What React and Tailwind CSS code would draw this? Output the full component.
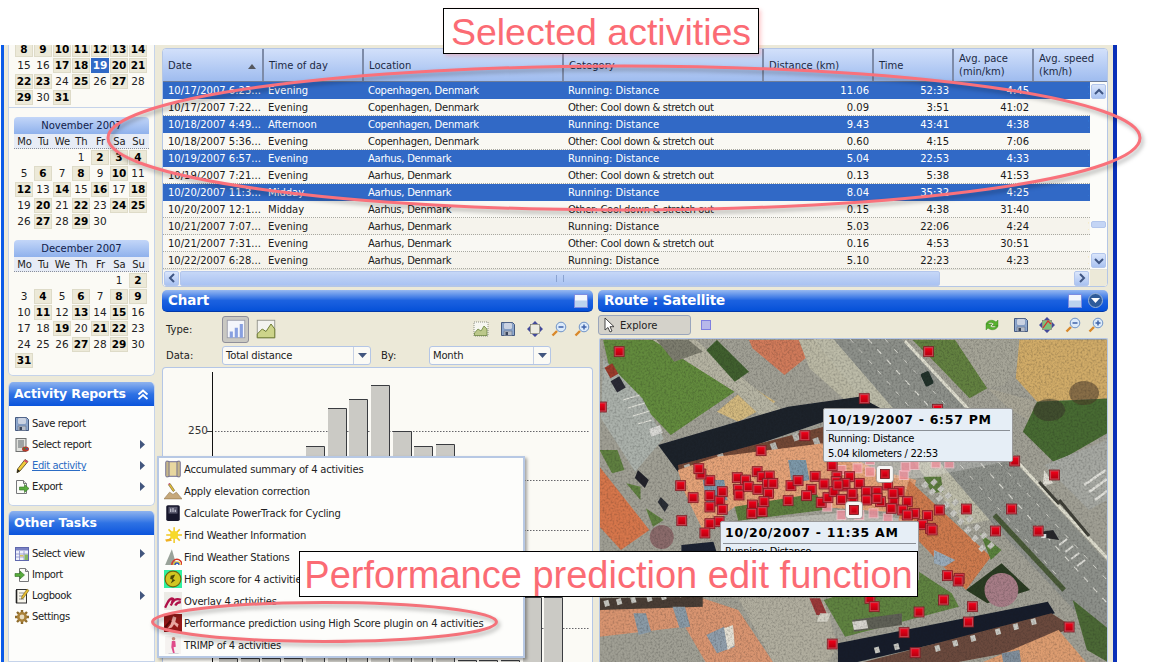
import React from "react";

const Svg = ({ s = 16, className = "", children }) => (
  <svg width={s} height={s} viewBox="0 0 16 16" className={`shrink-0 ${className}`}>{children}</svg>
);

const Floppy = () => (
  <Svg>
    <path d="M1.5 1.5h11l2 2v11h-13z" fill="#8fa9cf" stroke="#45597e" />
    <rect x="4" y="2" width="8" height="6" fill="#f2f5fa" stroke="#6d81a5" strokeWidth=".6" />
    <path d="M5 4h6M5 6h6" stroke="#8fa0bf" strokeWidth=".8" />
    <rect x="4" y="10" width="8" height="4.5" fill="#b7bdc8" stroke="#5d6b85" strokeWidth=".6" />
    <rect x="5.5" y="11" width="2.5" height="3" fill="#39445a" />
  </Svg>
);
const SelectReport = () => (
  <Svg>
    <rect x="2" y="1.5" width="10" height="13" fill="#dfe0dc" stroke="#6f7170" />
    <rect x="4" y="3" width="6" height="8" fill="#9fa3a3" />
    <ellipse cx="11.5" cy="12" rx="3.5" ry="2.5" fill="#b93a2a" />
    <circle cx="10.5" cy="11.6" r="1" fill="#3a8a3a" />
    <circle cx="13" cy="11.8" r=".9" fill="#3158b8" />
  </Svg>
);
const Pencil = () => (
  <Svg>
    <path d="M11 1.5l3 2L6 13l-3 1.8L3.6 11z" fill="#f2cc3a" stroke="#4f4320" strokeWidth=".8" />
    <path d="M11 1.5l3 2-1.2 1.6-3-2z" fill="#d9506a" />
    <path d="M3.6 11L3 14.8 6 13z" fill="#23211a" />
  </Svg>
);
const ExportI = () => (
  <Svg>
    <path d="M2.5 1.5h7l3 3v10h-10z" fill="#fbfbf8" stroke="#77787a" />
    <path d="M9.5 1.5v3h3" fill="#dcdcd8" stroke="#77787a" />
    <path d="M5.5 8h5V5.5L15 9.5l-4.5 4V11h-5z" fill="#58ab3c" stroke="#2f6f24" strokeWidth=".6" />
  </Svg>
);
const SelectView = () => (
  <Svg>
    <rect x="1.5" y="1.5" width="13" height="13" fill="#eef0fa" stroke="#5f68ad" />
    <rect x="2" y="2" width="12" height="2.5" fill="#7b82c4" />
    <path d="M2 8h12M2 11h8M5.5 5v9M10 5v9" stroke="#8a90c8" strokeWidth=".8" />
    <rect x="10.5" y="8.5" width="3.5" height="5.5" fill="#86b860" />
    <rect x="6" y="9" width="3.5" height="1.5" fill="#d9c35a" />
  </Svg>
);
const ImportI = () => (
  <Svg>
    <path d="M5.5 1.5h6l3 3v10h-9z" fill="#fbfbf8" stroke="#77787a" />
    <path d="M11.5 1.5v3h3" fill="#dcdcd8" stroke="#77787a" />
    <path d="M1 6.5h5V4l4.5 4L6 12V9.5H1z" fill="#58ab3c" stroke="#2f6f24" strokeWidth=".6" />
  </Svg>
);
const Logbook = () => (
  <Svg>
    <rect x="2.5" y="1.5" width="10" height="13.5" fill="#f8f6ec" stroke="#333" />
    <path d="M2.5 2v13" stroke="#222" strokeWidth="1.6" />
    <path d="M5 5h5M5 8h5M5 11h5" stroke="#777" strokeWidth=".8" />
    <path d="M13 1l2 1.5-5.5 7.5-2 1 .3-2.4z" fill="#e6bd30" stroke="#5a4a16" strokeWidth=".5" />
  </Svg>
);
const Gear = () => (
  <Svg>
    <g stroke="#8c6a2c" strokeWidth="2.4">
      <path d="M8 1v14M1 8h14M3 3l10 10M13 3L3 13" />
    </g>
    <circle cx="8" cy="8" r="5" fill="#a98138" />
    <circle cx="8" cy="8" r="2.4" fill="#e8dcc0" />
  </Svg>
);
const Scroll = () => (
  <Svg s={18}>
    <rect x="3" y="1.5" width="10" height="13" fill="#e8d7a0" stroke="#7d7aa0" />
    <rect x="1.5" y="1" width="3" height="14" rx="1" fill="#c6b68a" stroke="#5f5f8e" strokeWidth=".7" />
    <rect x="11.5" y="1" width="3" height="14" rx="1" fill="#c6b68a" stroke="#5f5f8e" strokeWidth=".7" />
  </Svg>
);
const Elev = () => (
  <Svg s={18}>
    <path d="M0 15l5-6 3 2 3-2 5 6z" fill="#c6a87a" stroke="#8c7146" strokeWidth=".5" />
    <path d="M4 2.5l1.5-1 4 6-1.4 1z" fill="#e6c13a" stroke="#5a4516" strokeWidth=".5" />
    <path d="M4 2.5l1.5-1-.4-.7-1.5 1z" fill="#c8407a" />
  </Svg>
);
const Power = () => (
  <Svg s={18}>
    <rect x="2" y="1" width="12" height="14" rx="1.5" fill="#17172c" />
    <rect x="4" y="2.5" width="8" height="6" fill="#59596e" />
    <path d="M6 7V4M8 7V3.5M10 7V5" stroke="#d8d8e4" strokeWidth=".9" />
  </Svg>
);
const Sun = () => (
  <Svg s={18}>
    <g stroke="#f1c71c" strokeWidth="1.3">
      <path d="M9 1v14M2 8h14M4 3l10 10M14 3L4 13" />
    </g>
    <circle cx="9" cy="8" r="3.6" fill="#f7d92a" />
    <path d="M1 12l5-1 1 2-5 1z" fill="#f0b020" />
  </Svg>
);
const Rainbow = () => (
  <Svg s={18}>
    <path d="M1 15L7 1l4 14z" fill="#9aa39a" />
    <path d="M7 15a4.5 5 0 0 1 9 0" fill="none" stroke="#d83a2a" strokeWidth="1.3" />
    <path d="M8.4 15a3.2 3.5 0 0 1 6.2 0" fill="none" stroke="#e8c52a" strokeWidth="1.2" />
    <path d="M9.6 15a2 2.4 0 0 1 3.8 0" fill="none" stroke="#2852c0" strokeWidth="1.2" />
  </Svg>
);
const Score = () => (
  <Svg s={18}>
    <rect x="0" y="0" width="16" height="16" fill="#2ff0a0" />
    <circle cx="8" cy="8" r="7" fill="#d2c520" stroke="#6e6410" />
    <path d="M6 5l4-1-2 4 2 1-4 3 1.500-3.500-2-.5z" fill="#4c4808" />
  </Svg>
);
const Overlay = () => (
  <Svg s={18}>
    <rect width="16" height="16" fill="#ecebe6" />
    <path d="M1 14C4 7 6 5 8 6l-1 4M6 12c2-5 5-7 9-5M10 12c1-2 2-3 5-3" fill="none" stroke="#b01048" strokeWidth="2" />
  </Svg>
);
const Perf = () => (
  <Svg s={18}>
    <rect width="16" height="16" fill="#951818" />
    <path d="M8 2l3 1-1 4 3 2-1 3-3-3-2 3-4 1 3-4 1-4z" fill="#e9a6a0" />
    <path d="M0 13L6 6" stroke="#5a0808" strokeWidth="2" />
  </Svg>
);
const Trimp = () => (
  <Svg s={18}>
    <rect x="1" width="14" height="16" fill="#f5f2f0" />
    <circle cx="8.500" cy="2.500" r="1.600" fill="#c98a7a" />
    <path d="M7 4.500h3l.5 5-2 .5 1 5H8l-1.500-5z" fill="#e04a8a" />
    <path d="M4 16h9" stroke="#bcbcc8" strokeWidth="1" />
  </Svg>
);
const BarIcon = () => (
  <Svg s={20}>
    <rect x="1" y="1" width="14" height="14" fill="#f4f6fb" stroke="#9a9ca8" strokeWidth=".7" />
    <rect x="3" y="10" width="2.500" height="5" fill="#88a0e0" />
    <rect x="7" y="7" width="2.500" height="8" fill="#88a0e0" />
    <rect x="11" y="4" width="2.500" height="11" fill="#88a0e0" />
  </Svg>
);
const AreaIcon = ({ s = 20 }) => (
  <Svg s={s}>
    <rect x="1" y="1" width="14" height="14" fill="#f3f3ef" stroke="#8f8f86" strokeWidth=".7" />
    <path d="M1 12l4-4 3 2 4-6 3 4v7H1z" fill="#cdd48a" stroke="#6f7c35" strokeWidth=".8" />
  </Svg>
);
const ChartSmall = () => (
  <Svg>
    <rect x="1" y="1" width="14" height="14" fill="#f6f6f0" stroke="#77786c" strokeWidth=".8" strokeDasharray="1 1" />
    <path d="M1.500 12l3.500-4 3 2 3-5 3 3v6.500h-12.500z" fill="#bcc88a" stroke="#5f7a30" strokeWidth=".7" />
  </Svg>
);
const MoveI = ({ map }) => (
  <Svg>
    <rect x="3.500" y="3.500" width="9" height="9" fill={map ? "#7cc07a" : "#ecebe0"} stroke="#7a7a70" strokeWidth=".7" />
    {map && <path d="M4 11l5-7 3 3" stroke="#dc2a2a" strokeWidth="1.200" fill="none" />}
    <path d="M8 0l3 3H5zM8 16l-3-3h6zM0 8l3-3v6zM16 8l-3 3V5z" fill="#434a9a" />
  </Svg>
);
const Zoom = ({ plus }) => (
  <Svg>
    <path d="M6 10L1.500 14.500" stroke="#d9882a" strokeWidth="2.400" />
    <circle cx="10" cy="6" r="4.800" fill="#dbeafa" stroke="#6f93c6" />
    <path d="M7.500 6h5" stroke="#3e62a8" strokeWidth="1.500" />
    {plus && <path d="M10 3.500v5" stroke="#3e62a8" strokeWidth="1.500" />}
  </Svg>
);
const Refresh = () => (
  <Svg>
    <path d="M2 7c1-4 7-5 10-2l2-2v6H8l2-2C8 5 5 5 4 7z" fill="#58b030" stroke="#2f7a1a" strokeWidth=".4" />
    <path d="M14 9c-1 4-7 5-10 2l-2 2V7h6L6 9c2 2 5 2 6 0z" fill="#58b030" stroke="#2f7a1a" strokeWidth=".4" />
  </Svg>
);
const Cursor = () => (
  <Svg>
    <path d="M3 1l0 12 3-2.500 2 4.500 2-1-2-4.300h4z" fill="#fff" stroke="#333" strokeWidth=".9" />
  </Svg>
);
const Collapse = () => (
  <span className="flex flex-col w-[14px] h-[14px] border border-[#7c8ce0] bg-[#d8e4f6] gap-px">
    <span className="h-[5px] bg-[#f4f7fc]" />
    <span className="h-[6px] bg-[#bcd3ee]" />
  </span>
);
const Tri = ({ c = "#42567e" }) => (
  <svg width="9" height="6" viewBox="0 0 9 6" className="shrink-0"><path d="M0 0h9L4.500 5z" fill={c} /></svg>
);
const RightTri = () => (
  <svg width="5" height="9" viewBox="0 0 5 9" className="shrink-0"><path d="M0 0l5 4.500L0 9z" fill="#42567e" /></svg>
);

const Cell = ({ d }) => {
  if (d === 0) return <span className="w-[18px] h-[15px]" />;
  const b = typeof d === "string";
  const sel = d === "19*";
  const n = b ? d.replace(/[b*]/g, "") : d;
  return (
    <span
      className={`w-[18px] h-[15px] flex items-center justify-center text-[10.5px] leading-none ${
        sel ? "bg-[#3169c6] text-white font-bold" : b ? "bg-[#ece9d8] border border-[#dedbc8] font-bold text-black" : "text-[#222]"
      }`}
    >
      {n}
    </span>
  );
};
const Days = ({ rows, className = "" }) => (
  <div className={`grid grid-cols-[repeat(7,18px)] gap-x-px gap-y-px ${className}`}>
    {rows.flat().map((d, i) => <Cell key={i} d={d} />)}
  </div>
);
const Month = ({ title, rows, className }) => (
  <div className={`${className} w-[135px] -ml-px`}>
    <div className="h-[17px] rounded-t-[4px] bg-gradient-to-b from-[#c3d6f8] to-[#8fb1ec] text-center text-[10px] leading-[17px] text-[#10204a]">{title}</div>
    <div className="h-[15px] pl-px grid grid-cols-[repeat(7,19px)] text-center text-[10px] leading-[15px] bg-[#e7ecf6] border-b border-dotted border-[#8a8f9a] text-[#222]">
      {["Mo", "Tu", "We", "Th", "Fr", "Sa", "Su"].map((w) => <span key={w}>{w}</span>)}
    </div>
    <Days rows={rows} className="pt-px pl-px" />
  </div>
);

const oct = [["8b","9b","10b","11b","12b","13b","14b"],[15,16,"17b","18b","19*","20b","21b"],["22b","23b",24,"25b",26,"27b",28],["29b",30,"31b",0,0,0,0]];
const nov = [[0,0,0,1,"2b","3b","4b"],[5,"6b",7,"8b",9,"10b",11],["12b",13,"14b",15,"16b",17,"18b"],[19,"20b",21,"22b",23,"24b","25b"],[26,"27b",28,"29b",30,0,0]];
const dec = [[0,0,0,0,0,1,"2b"],[3,"4b",5,"6b",7,"8b","9b"],[10,"11b",12,"13b",14,"15b",16],[17,18,"19b",20,"21b","22b",23],[24,25,26,"27b",28,"29b",30],["31b",0,0,0,0,0,0]];

const grad = "bg-gradient-to-b from-[#8fb3ee] via-[#2e72e4] to-[#0a54dc]";

const TaskRow = ({ icon, label, arrow, link }) => (
  <div className="h-[21px] flex items-center pl-[5px] pr-[9px] gap-[2px]">
    <span className="w-4 flex justify-center">{icon}</span>
    <span className={`flex-1 text-[10px] tracking-[-0.4px] ${link ? "text-[#2b6cc4] underline" : "text-[#222]"}`}>{label}</span>
    {arrow && <RightTri />}
  </div>
);

const cols = "grid grid-cols-[101px_100px_200px_200px_110px_80px_80px_55px]";
const Head = ({ children, sort, last }) => (
  <div className={`flex items-center justify-between pl-[5px] pr-[5px] text-[10px] leading-[13px] text-[#1c2a44] whitespace-nowrap ${last ? "" : "border-r-2 border-[#7d8ba8]"}`}>
    <span>{children}</span>
    {sort && <svg width="8" height="5" viewBox="0 0 8 5" className="mt-[3px] mr-px shrink-0"><path d="M4 0l4 5H0z" fill="#55585f" /></svg>}
  </div>
);

const CPH = "Copenhagen, Denmark";
const AAR = "Aarhus, Denmark";
const RUN = "Running: Distance";
const OTH = "Other: Cool down & stretch out";
const data = [
  ["10/17/2007 6:23...", "Evening", CPH, RUN, "11.06", "52:33", "4:45", 1],
  ["10/17/2007 7:22...", "Evening", CPH, OTH, "0.09", "3:51", "41:02", 0],
  ["10/18/2007 4:49...", "Afternoon", CPH, RUN, "9.43", "43:41", "4:38", 1],
  ["10/18/2007 5:36...", "Evening", CPH, OTH, "0.60", "4:15", "7:06", 0],
  ["10/19/2007 6:57...", "Evening", AAR, RUN, "5.04", "22:53", "4:33", 1],
  ["10/19/2007 7:21...", "Evening", AAR, OTH, "0.13", "5:38", "41:53", 0],
  ["10/20/2007 11:3...", "Midday", AAR, RUN, "8.04", "35:32", "4:25", 1],
  ["10/20/2007 12:1...", "Midday", AAR, OTH, "0.15", "4:38", "31:40", 0],
  ["10/21/2007 7:07...", "Evening", AAR, RUN, "5.03", "22:06", "4:24", 0],
  ["10/21/2007 7:31...", "Evening", AAR, OTH, "0.16", "4:53", "30:51", 0],
  ["10/22/2007 6:28...", "Evening", AAR, RUN, "5.10", "22:23", "4:23", 0],
];

const ScrollBtn = ({ dir, className = "" }) => {
  const p = { u: "M2 8l4-4 4 4", d: "M2 4l4 4 4-4", l: "M8 2L4 6l4 4", r: "M4 2l4 4-4 4" }[dir];
  return (
    <span className={`w-[15px] h-[15px] rounded-[2px] border border-[#b3c6ec] bg-gradient-to-b from-[#dbe6fb] to-[#a9c2f1] flex items-center justify-center shrink-0 ${className}`}>
      <svg width="12" height="12" viewBox="0 0 12 12"><path d={p} fill="none" stroke="#3f5684" strokeWidth="2" /></svg>
    </span>
  );
};

const Table = () => (
  <div className="h-[239px] w-[946px] mt-[3px] rounded-[4px] border border-[#b4c6e6] bg-[#fbfaf5] overflow-hidden flex flex-col shrink-0">
    <div className={`${cols} h-[33px] bg-gradient-to-b from-[#d2e0fa] to-[#9fbcef] border-b border-[#6f7d98] shrink-0`}>
      <Head sort>Date</Head>
      <Head>Time of day</Head>
      <Head>Location</Head>
      <Head>Category</Head>
      <Head>Distance (km)</Head>
      <Head>Time</Head>
      <Head>Avg. pace<br />(min/km)</Head>
      <Head last>Avg. speed<br />(km/h)</Head>
    </div>
    <div className="flex flex-1 min-h-0 relative">
      <div className="w-[927px]">
        {data.map((r, i) => {
          const sel = r[7];
          return (
            <div
              key={i}
              className={`${cols} h-[17px] leading-[17px] text-[10px] border-b border-dotted ${
                sel ? "bg-[#3169c6] text-white border-[#3169c6]" : `text-[#1a1a1a] border-[#a8a8a0] ${i % 2 === 0 ? "bg-[#f5f3ec]" : "bg-[#f9f8f3]"}`
              }`}
            >
              <span className="pl-[5px] whitespace-nowrap">{r[0]}</span>
              <span className="pl-[4px]">{r[1]}</span>
              <span className="pl-[4px] tracking-[-0.25px]">{r[2]}</span>
              <span className={`pl-[4px] ${r[3] === OTH ? "tracking-[-0.33px]" : ""}`}>{r[3]}</span>
              <span className="text-right pr-[5px]">{r[4]}</span>
              <span className="text-right pr-[5px]">{r[5]}</span>
              <span className="text-right pr-[5px]">{r[6]}</span>
              <span className="pl-[54px] overflow-hidden">{i % 2 === 0 ? "1" : ""}</span>
            </div>
          );
        })}
      </div>
      <div className="w-[17px] h-[187px] bg-[#fcfcf9] flex flex-col items-center pt-[2px] pb-px relative">
        <ScrollBtn dir="u" />
        <div className="flex-1 pt-[122px]"><div className="w-[15px] h-[7px] rounded-[2px] bg-[#c4d5f5] border border-[#b3c6ec]" /></div>
        <ScrollBtn dir="d" />
      </div>
    </div>
    <div className="h-[17px] shrink-0 flex items-center bg-[#f7f6f1] border-t border-[#e4e3da] relative">
      <ScrollBtn dir="l" className="ml-px" />
      <div className="w-[760px] h-[15px] ml-px rounded-[2px] bg-gradient-to-b from-[#c6d7f7] to-[#aac3f2] border border-[#b3c6ec] flex items-center justify-center">
        <span className="w-[8px] h-[7px] border-x border-[#8aa3d0]" />
      </div>
      <div className="flex-1" />
      <ScrollBtn dir="r" className="mr-px" />
      <div className="w-[17px] h-full bg-[#ece9d8]" />
    </div>
  </div>
);

const PanelHead = ({ title, children }) => (
  <div className="h-[22px] rounded-[5px] border-b border-[#0338a8] bg-gradient-to-b from-[#97b8f0] via-[#1c62e0] via-50% to-[#0450d8] flex items-center justify-between pl-[6px] pr-[5px] shrink-0">
    <span className="text-white font-bold text-[13.5px] leading-none tracking-[-0.15px]">{title}</span>
    <span className="flex items-center gap-[6px]">{children}</span>
  </div>
);

const Select = ({ w, text }) => (
  <div className={`${w} h-[19px] rounded-[3px] border border-[#b4c6e6] bg-[#fbfaf5] flex items-center text-[10px] text-[#222]`}>
    <span className="flex-1 pl-[3px] tracking-[-0.2px]">{text}</span>
    <span className="w-[17px] h-full border-l border-[#c6d0e4] flex items-center justify-center"><Tri /></span>
  </div>
);

const barsTop = [658, 658, 658, 658, 446, 408, 399, 385, 431, 446, 444, 660, 660, 660, 597, 597];
const barsX = [219, 241, 262, 284, 306, 328, 349, 371, 393, 414, 436, 458, 479, 501, 523, 544];
const Chart = () => (
  <svg className="block" width="429" height="294" viewBox="163 368 429 294">
    {[431, 480, 530, 579, 628].map((y) => (
      <path key={y} d={`M215 ${y + 0.5}H590`} stroke="#66666a" strokeWidth="1" strokeDasharray="1.500 1.500" />
    ))}
    {barsX.map((x, i) => {
      const r = x + 18;
      return (
        <g key={x}>
          <rect x={x} y={barsTop[i]} width={r - x} height={662 - barsTop[i]} fill="#cbcac5" />
          <path d={`M${x} ${barsTop[i] + 0.5}H${r + 0.5}V662`} fill="none" stroke="#3a3c40" strokeWidth="1" />
        </g>
      );
    })}
    <path d="M212.500 372V662" stroke="#111" strokeWidth="1" />
    <path d="M207 431.500h5" stroke="#333" strokeWidth="1" />
    <text x="188" y="434" fontSize="10.500" fill="#333" fontFamily="DejaVu Sans">250</text>
  </svg>
);

const z6 = (x, y) => [595 + x / 2.8, 285 + y / 3];
const z7 = (x, y) => [595 + x / 2.8, 450 + y / 3];
const markers = [
  ...[[65,200],[935,200],[754,341],[15,366],[960,373],[587,452],[464,497]].map(([x, y]) => z6(x, y)),
  ...[[238,107],[273,143],[320,92],[295,72],[289,56],[320,137],[348,153],[320,171],[355,125],[355,178],[346,215],[320,221],[306,249],[241,212],
    [397,83],[420,90],[400,118],[402,135],[428,110],[453,65],[467,80],[487,78],[482,100],[497,100],[455,118],[485,130],[472,155],[440,165],[438,190],[467,185],[540,152],[548,107],[568,92],[605,118],[592,137],[616,79],[641,102],[633,157],[652,143],[669,125],[677,80],[675,95],[698,108],[713,80],[690,148],[722,148],[740,100],[760,125],[790,125],[820,105],[852,125],[800,155],[760,150],[837,150],[875,155],[862,180],[895,190],[875,195],[830,175],[932,197],[965,180],[1041,177],[1168,177],[1123,243],[1243,243],[918,224],[940,235],[945,240],[988,377],[1021,385],[1018,393],[977,450],[1058,470],[770,445],[782,470],[908,486],[1047,516],[1330,531],[866,548],[664,582],[897,608],[1289,75],[1177,33],[664,47],[700,100],[680,105],[835,130],[790,145],[720,130]].map(([x, y]) => z7(x, y)),
];
const ghosts = [[770,65],[735,55],[865,75],[870,50],[895,45],[955,40],[993,40],[770,30],[690,195],[820,205],[650,170],[780,190],[740,195],[690,60]].map(([x, y]) => z7(x, y));

const P = ({ pts, z = z6, fill }) => <polygon points={pts.map(([x, y]) => z(x, y).join(",")).join(" ")} fill={fill} />;

const windows = [
  ...[[925,105],[945,125],[965,145],[985,165],[1005,190],[1025,215],[1045,240],[1065,265],[1085,295]].flatMap(([x, y]) => [[x, y, 45], [x + 25, y - 8, 45]]),
  ...[[30,460],[65,455],[105,450],[150,445],[190,440],[240,432]].map(([x, y]) => [x, y, -15]),
  ...[[790,600],[845,590],[960,595],[1010,580],[1060,565],[1130,545],[1180,530],[1230,515]].map(([x, y]) => [x, y, -15]),
].map(([x, y, a]) => [...z7(x, y), a]);

const Map = () => (
  <svg className="block w-full h-full" viewBox="599 339 509 323" preserveAspectRatio="none">
    <defs>
      <filter id="sat" x="0" y="0" width="100%" height="100%">
        <feGaussianBlur stdDeviation="0.6" />
      </filter>
      <filter id="noise" x="0" y="0" width="100%" height="100%" colorInterpolationFilters="sRGB">
        <feTurbulence type="fractalNoise" baseFrequency="0.5" numOctaves="2" seed="4" />
        <feColorMatrix type="matrix" values="0 0 0 0 0.1  0 0 0 0 0.1  0 0 0 0 0.1  1.8 0 0 0 -0.75" />
      </filter>
      <linearGradient id="mk" x1="0" y1="0" x2="0" y2="1">
        <stop offset="0" stopColor="#f00018" />
        <stop offset="1" stopColor="#b40010" />
      </linearGradient>
    </defs>
    <g filter="url(#sat)">
      <rect x="599" y="339" width="509" height="323" fill="#a09f94" />
      <P fill="#628a3c" pts={[[20,165],[160,165],[390,320],[210,450],[40,260]]} />
      <P fill="#d2b87e" pts={[[340,380],[430,300],[505,350],[400,410]]} />
      <P fill="#b5b3a2" pts={[[160,165],[280,165],[540,390],[480,410],[390,320]]} />
      <P fill="#7c7b6e" pts={[[170,165],[260,165],[300,200],[220,230]]} />
      <P fill="#3f5f2f" pts={[[340,165],[430,260],[390,290],[310,195]]} />
      <P fill="#cf7a5a" pts={[[430,165],[570,165],[600,210],[530,270],[440,190]]} />
      <P fill="#bab8a4" pts={[[570,165],[640,165],[780,340],[700,345],[600,250]]} />
      <P fill="#cfcdbb" pts={[[640,165],[690,165],[800,300],[770,320]]} />
      <P fill="#abb1ab" pts={[[20,220],[130,340],[190,460],[110,560],[14,400]]} />
      <g stroke="#e4e4dc" strokeWidth="1">
        <path d="M622 400l17-5M627 408l17-5M632 416l17-5M637 424l14-4" />
      </g>
      <rect x="606" y="365" width="9" height="12" fill="#9c3a2c" transform="rotate(-30 610 371)" />
      <rect x="612" y="378" width="10" height="13" fill="#2a2c34" transform="rotate(-30 617 384)" />
      <rect x="649" y="427" width="12" height="8" fill="#d8d8d4" transform="rotate(-20 655 431)" />
      {/* main road */}
      <polygon points="833,339 902,339 1108,562 1108,645 990,520" fill="#8d908a" />
      <polygon points="813,339 833,339 990,520 965,525" fill="#bcbba8" />
      <path d="M868 339L1108 603" stroke="#dcdcd4" strokeWidth="1.200" strokeDasharray="6 8" />
      <path d="M850 339L1060 578" stroke="#d0d0c8" strokeWidth="1" strokeDasharray="5 9" />
      <path d="M885 339L1108 580" stroke="#d0d0c8" strokeWidth="1" strokeDasharray="5 9" />
      <path d="M905 341L1110 560" stroke="#e0dfd0" strokeWidth="3" />
      <rect x="923" y="372" width="9" height="14" rx="2" fill="#20302c" transform="rotate(-25 927 379)" />
      <P fill="#628040" pts={[[890,165],[1010,165],[1100,310],[1050,340],[960,240]]} />
      <P fill="#a5a497" pts={[[1010,165],[1200,165],[1190,230],[1150,300],[1100,310]]} />
      <P fill="#d0ab68" pts={[[1190,165],[1445,165],[1445,340],[1240,350],[1180,280]]} />
      <P fill="#a8a596" pts={[[1100,310],[1240,350],[1240,420],[1160,370]]} />
      <P fill="#476a30" pts={[[1240,350],[1445,340],[1445,440],[1290,535],[1200,440]]} />
      <ellipse cx="1050" cy="410" rx="16" ry="11" fill="#3a3a2c" opacity=".6" />
      <ellipse cx="1085" cy="393" rx="15" ry="12" fill="#4a3a2a" opacity=".55" />
      <polygon points="1045,465 1108,440 1108,500 1090,510" fill="#a6a8a2" />
      <path d="M1085 485l22-15M1090 492l18-13M1096 500l12-9" stroke="#e0e0da" strokeWidth="2.500" />
      {/* bldg row 1 */}
      <P fill="#1a202c" pts={[[175,480],[540,365],[740,335],[800,370],[640,410],[230,560]]} />
      <P fill="#724636" pts={[[230,540],[640,425],[650,470],[640,510],[240,600]]} />
      <g fill="#b8b8b2">
        {[[258,550],[352,518],[396,524],[500,485],[562,455],[620,470]].map(([x, y]) => {
          const [a, b] = z6(x, y);
          return <rect key={x} x={a - 3} y={b - 4} width="6" height="8" transform={`rotate(-20 ${a} ${b})`} />;
        })}
      </g>
      <P z={z7} fill="#e4a278" pts={[[230,60],[340,20],[640,-20],[790,60],[900,90],[880,190],[620,170],[390,170],[300,240],[250,130]]} />
      <P z={z7} fill="#7c97a8" pts={[[300,90],[360,90],[370,150],[310,160]]} />
      <P z={z7} fill="#7c97a8" pts={[[540,30],[590,30],[600,90],[550,100]]} />
      <P z={z7} fill="#5c7b3c" pts={[[390,170],[620,130],[640,180],[400,212]]} />
      <P z={z7} fill="#5c7b3c" pts={[[920,80],[970,80],[975,125],[945,130]]} />
      <P z={z7} fill="#cd7a4e" pts={[[880,90],[1110,320],[1040,420],[850,210]]} />
      <P z={z7} fill="#99aab8" pts={[[950,300],[1010,330],[980,350],[950,340]]} />
      <P z={z7} fill="#d6764c" pts={[[10,50],[150,240],[70,300],[10,230]]} />
      <P z={z7} fill="#5f7f3f" pts={[[10,0],[60,0],[80,60],[45,70]]} />
      <P z={z7} fill="#5f7f3f" pts={[[140,175],[190,210],[160,230]]} />
      <P z={z7} fill="#5f7f3f" pts={[[85,100],[125,110],[125,150]]} />
      <circle cx="661" cy="537" r="12" fill="#8a6a6a" />
      <P z={z7} fill="#1d2330" pts={[[240,285],[330,275],[340,310],[240,320]]} />
      <polygon points="637,470 648,480 644,488 634,478" fill="#21242a" />
      <polygon points="660,497 668,505 664,512 657,502" fill="#2a2d34" />
      {/* lower */}
      <P z={z7} fill="#d89470" pts={[[10,470],[300,445],[400,480],[500,640],[310,640],[250,530],[10,560]]} />
      <P z={z7} fill="#4a3e34" pts={[[10,445],[300,440],[300,470],[10,480]]} />
      <P z={z7} fill="#8a9aa6" pts={[[105,490],[140,490],[155,545],[120,555]]} />
      <P z={z7} fill="#8a9aa6" pts={[[215,470],[250,470],[265,530],[235,535]]} />
      <P z={z7} fill="#8f9daa" pts={[[310,555],[360,530],[390,590],[340,610]]} />
      <P z={z7} fill="#e4e0d4" pts={[[360,535],[385,525],[390,585],[370,600]]} />
      <P z={z7} fill="#b0ad9e" pts={[[400,445],[640,445],[680,590],[650,640],[500,640]]} />
      <P z={z7} fill="#5e8240" pts={[[640,450],[900,360],[1000,430],[1020,470],[700,560]]} />
      <P z={z7} fill="#2a3a20" pts={[[1040,420],[1140,340],[1220,420],[1100,460]]} />
      <circle cx="1002" cy="590" r="17" fill="#a67c86" />
      <P z={z7} fill="#58803a" pts={[[1080,250],[1140,300],[1110,330]]} />
      <P z={z7} fill="#161e2c" pts={[[680,580],[1270,455],[1290,490],[1100,545],[720,640],[680,640]]} />
      <P z={z7} fill="#6b4a3c" pts={[[740,640],[1280,490],[1340,530],[1200,600],[1000,640]]} />
      <P z={z7} fill="#dc9c70" pts={[[1080,640],[1300,540],[1380,640]]} />
      <P z={z7} fill="#7f8d9a" pts={[[1140,610],[1190,600],[1195,640],[1145,640]]} />
      <P z={z7} fill="#4b6835" pts={[[1340,450],[1445,540],[1445,640],[1380,600]]} />
      <P z={z7} fill="#9a3838" pts={[[600,445],[630,445],[650,495],[620,495]]} />
      <P z={z7} fill="#d4d2c6" pts={[[630,490],[660,490],[650,515],[620,515]]} />
      <P z={z7} fill="#5f6056" pts={[[720,510],[860,490],[860,525],[725,545]]} />
      <P z={z7} fill="#d8d6d0" pts={[[720,515],[760,510],[765,535],[725,540]]} />
      <P z={z7} fill="#e0ded4" pts={[[1260,60],[1285,100],[1255,110]]} />
      <path d="M1040 482l20 22M1060 500l30 36" stroke="#3f3f38" strokeWidth="3" />
      <path d="M995 515l70 75" stroke="#4a5a38" strokeWidth="5" />
      <path d="M1060 545l8 -6M1066 552l8 -6M1072 559l8 -6M1078 566l8 -6" stroke="#dcdcd6" strokeWidth="2" />
      <polygon points="1040,532 1054,530 1060,540 1046,538" fill="#26282c" />
      <rect x="1042" y="534" width="5" height="4" fill="#e4e4e4" />
      <g fill="#c8c8c2">
        {windows.map(([x, y, a], i) => <rect key={i} x={x - 2.500} y={y - 3} width="5" height="6" transform={`rotate(${a} ${x} ${y})`} />)}
      </g>
    </g>
    <rect x="599" y="339" width="509" height="323" filter="url(#noise)" opacity=".3" />
    <polygon points="850,462 1004,462 922,478 885,478" fill="#fff" opacity=".22" />
    <polygon points="738,521 852,512 919,521" fill="#fff" opacity=".28" />
    {ghosts.map(([x, y], i) => (
      <g key={i}><rect x={x - 4.500} y={y - 4.500} width="9" height="9" fill="#ee8a98" stroke="#f8c4cc" strokeWidth="1" opacity=".75" /></g>
    ))}
    {markers.map(([x, y], i) => (
      <g key={i}>
        <rect x={x - 5} y={y - 5} width="10" height="10" fill="#c84452" stroke="#7d1c22" strokeWidth=".8" />
        <rect x={x - 3.500} y={y - 3.500} width="7" height="7" fill="url(#mk)" />
      </g>
    ))}
    {[[885, 474], [854, 510]].map(([x, y]) => (
      <g key={x}>
        <rect x={x - 8.500} y={y - 8.500} width="17" height="17" rx="3" fill="#f6f6f4" stroke="#8a8a88" strokeWidth=".7" />
        <rect x={x - 4.500} y={y - 4.500} width="9" height="9" fill="#d11a28" stroke="#6a1418" strokeWidth=".8" />
        <rect x={x - 2.500} y={y - 2.500} width="5" height="5" fill="url(#mk)" />
      </g>
    ))}
  </svg>
);

const MapTip = ({ className, title, lines }) => (
  <div className={`absolute bg-[#e6eef6] border border-[#9a9a9a] rounded-[2px] overflow-hidden text-black ${className}`}>
    <div className="px-[4px] pt-[2px] h-[21px] text-[12.5px] leading-[17px] font-bold whitespace-nowrap tracking-[0.7px]">{title}</div>
    <div className="mx-[2px] border-t border-[#8a8f96]" />
    {lines.map((l) => <div key={l} className="pl-[4px] mt-px text-[10px] leading-[14px] whitespace-nowrap tracking-[-0.3px]">{l}</div>)}
  </div>
);

const menu = [
  [<Scroll />, "Accumulated summary of 4 activities"],
  [<Elev />, "Apply elevation correction"],
  [<Power />, "Calculate PowerTrack for Cycling"],
  [<Sun />, "Find Weather Information"],
  [<Rainbow />, "Find Weather Stations"],
  [<Score />, "High score for 4 activities"],
  [<Overlay />, "Overlay 4 activities"],
  [<Perf />, "Performance prediction using High Score plugin on 4 activities"],
  [<Trimp />, "TRIMP of 4 activities"],
];

export default function App() {
  return (
    <div className="relative w-[1152px] h-[662px] overflow-hidden bg-white pt-[45px] font-['DejaVu_Sans',sans-serif]">
      <div className="ml-px w-[1116px] h-[617px] bg-[#ece9d8] border-l-[3px] border-l-[#0a5ae8] border-r-[4px] border-r-[#0a30b8] flex overflow-hidden">
        {/* Sidebar */}
        <aside className="ml-[4px] w-[147px] shrink-0 flex flex-col">
          <div className="h-[331px] shrink-0 rounded-b-[5px] bg-[#fbfaf5] border border-t-0 border-[#c5d3ea] pl-[6px] overflow-hidden">
            <Days rows={oct} className="-mt-[3px] pb-[2px]" />
            <div className="h-px -ml-[6px] w-[145px] bg-[#c5d3ea]" />
            <Month title="November 2007" rows={nov} className="mt-[9px]" />
            <Month title="December 2007" rows={dec} className="mt-[11px]" />
          </div>
          <div className="mt-[6px] h-[124px] shrink-0 rounded-[5px] bg-[#fdfdfb] border border-t-0 border-[#c5d3ea] overflow-hidden">
            <div className={`h-[24px] ${grad} flex items-center justify-between px-[5px] -mx-px`}>
              <span className="text-white font-bold text-[12.5px] ml-px tracking-[-0.1px]">Activity Reports</span>
              <svg width="12" height="11" viewBox="0 0 12 11" className="mr-[1px]"><path d="M1.500 5.500L6 1.500l4.500 4M1.500 10L6 6l4.500 4" fill="none" stroke="#fff" strokeWidth="1.800" /></svg>
            </div>
            <div className="pt-[7px]">
              <TaskRow icon={<Floppy />} label="Save report" />
              <TaskRow icon={<SelectReport />} label="Select report" arrow />
              <TaskRow icon={<Pencil />} label="Edit activity" arrow link />
              <TaskRow icon={<ExportI />} label="Export" arrow />
            </div>
          </div>
          <div className="mt-[5px] flex-1 rounded-t-[5px] bg-[#fdfdfb] border border-t-0 border-[#c5d3ea] overflow-hidden">
            <div className={`h-[24px] ${grad} flex items-center px-[5px] -mx-px`}>
              <span className="text-white font-bold text-[12.5px] ml-px">Other Tasks</span>
            </div>
            <div className="pt-[8px]">
              <TaskRow icon={<SelectView />} label="Select view" arrow />
              <TaskRow icon={<ImportI />} label="Import" />
              <TaskRow icon={<Logbook />} label="Logbook" arrow />
              <TaskRow icon={<Gear />} label="Settings" />
            </div>
          </div>
        </aside>

        {/* Main */}
        <main className="ml-[7px] w-[946px] shrink-0 flex flex-col">
          <Table />
          <div className="mt-[3px] flex gap-[5px] flex-1 min-h-0">
            {/* Chart panel */}
            <section className="w-[431px] flex flex-col">
              <PanelHead title="Chart"><Collapse /></PanelHead>
              <div className="h-[34px] flex items-center pl-[4px] pr-[3px] text-[10px] text-[#222]">
                <span className="w-[56px]">Type:</span>
                <span className="w-[27px] h-[27px] rounded-[3px] border border-[#8f8f9a] bg-[#c9c8c2] flex items-center justify-center"><BarIcon /></span>
                <span className="ml-[7px]"><AreaIcon /></span>
                <span className="flex-1" />
                <span className="flex items-center gap-[11px]">
                  <ChartSmall /><Floppy /><MoveI />
                  <span className="flex gap-[7px] -ml-[3px]"><Zoom /><Zoom plus /></span>
                </span>
              </div>
              <div className="h-[19px] flex items-center pl-[4px] text-[10px] text-[#222]">
                <span className="w-[56px]">Data:</span>
                <Select w="w-[149px]" text="Total distance" />
                <span className="w-[48px] ml-[10px]">By:</span>
                <Select w="w-[122px]" text="Month" />
              </div>
              <div className="mt-[2px] flex-1 min-h-0 rounded-t-[4px] bg-[#fbfaf5] border border-b-0 border-[#b4c6e6] overflow-hidden">
                <Chart />
              </div>
            </section>

            {/* Route panel */}
            <section className="w-[510px] flex flex-col relative">
              <PanelHead title="Route : Satellite">
                <Collapse />
                <span className="w-[15px] h-[15px] rounded-full bg-[#2e5b9a] border border-[#9ab4d8] flex items-center justify-center"><Tri c="#fff" /></span>
              </PanelHead>
              <div className="h-[26px] flex items-center pr-[4px]">
                <span className="w-[93px] h-[20px] rounded-[3px] border border-[#9aa6bc] bg-[#d4d2ca] flex items-center pl-[3px] gap-[2px] text-[10px] text-[#222]"><Cursor />Explore</span>
                <span className="ml-[10px] w-[10px] h-[10px] bg-[#b8b8ea] border border-[#7f7fe0]" />
                <span className="flex-1" />
                <span className="flex items-center gap-[10px]">
                  <span className="mr-[3px]"><Refresh /></span><Floppy /><MoveI map />
                  <span className="flex gap-[7px]"><Zoom /><Zoom plus /></span>
                </span>
              </div>
              <div className="flex-1 min-h-0 ml-px rounded-t-[2px] border-t border-x border-[#b4c6e6] overflow-hidden">
                <Map />
              </div>
            </section>
          </div>
        </main>
      </div>

      {/* Map tooltips */}
      <MapTip className="left-[823px] top-[408px] w-[190px] h-[54px]" title="10/19/2007 - 6:57 PM" lines={["Running: Distance", "5.04 kilometers / 22:53"]} />
      <MapTip className="left-[720px] top-[521px] w-[199px] h-[60px]" title="10/20/2007 - 11:35 AM" lines={["Running: Distance"]} />

      {/* Activity menu */}
      <div className="absolute left-[157px] top-[456px] w-[368px] h-[202px] bg-[#fdfdfb] border-2 border-[#b7c8e4] shadow-[2px_2px_3px_rgba(0,0,0,.35)]">
        {menu.map(([ic, t]) => (
          <div key={t} className="h-[22px] flex items-center pl-[5px] gap-[2px] text-[10px] text-[#222] whitespace-nowrap tracking-[-0.2px]">
            <span className="w-[18px] flex justify-center">{ic}</span>
            <span>{t}</span>
          </div>
        ))}
      </div>

      {/* Annotations */}
      <svg className="absolute left-0 top-0 pointer-events-none drop-shadow-[2px_3px_2px_rgba(0,0,0,.3)]" width="1152" height="662">
        <ellipse cx="624" cy="138" rx="516" ry="72" fill="none" stroke="#f9717b" strokeWidth="3" />
        <ellipse cx="324.500" cy="622" rx="172" ry="19.500" fill="none" stroke="#f4727a" strokeWidth="3" />
      </svg>
      <div className="absolute left-[443px] top-[8px] w-[316px] h-[46px] bg-white border border-black text-center text-[37.5px] leading-[46px] text-[#fb6b74] font-['Liberation_Sans',sans-serif] shadow-[2px_2px_4px_rgba(251,107,116,.35)] whitespace-nowrap">
        Selected activities
      </div>
      <div className="absolute left-[299px] top-[551px] w-[619px] h-[46px] bg-white border border-black text-center text-[38px] leading-[46px] text-[#fb6b74] font-['Liberation_Sans',sans-serif] whitespace-nowrap">
        Performance prediction edit function
      </div>
    </div>
  );
}
